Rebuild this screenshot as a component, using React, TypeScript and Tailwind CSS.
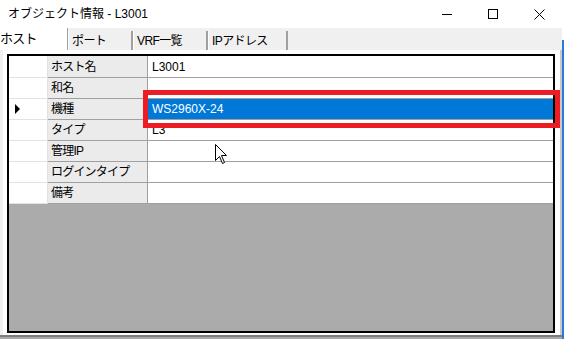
import React from "react"

type Row = {
  label: string
  value: string
  selected?: boolean
}

const rows: Row[] = [
  { label: "ホスト名", value: "L3001" },
  { label: "和名", value: "" },
  { label: "機種", value: "WS2960X-24", selected: true },
  { label: "タイプ", value: "L3" },
  { label: "管理IP", value: "" },
  { label: "ログインタイプ", value: "" },
  { label: "備考", value: "" },
]

const tabs = [
  { name: "ポート", w: "w-[65px]" },
  { name: "VRF一覧", w: "w-[75px]" },
  { name: "IPアドレス", w: "w-[80px]" },
]

function TitleBar() {
  return (
    <div className="h-[28px] flex items-center bg-white">
      <div className="pl-[8px] text-[12px] text-black">オブジェクト情報 - L3001</div>
      <div className="ml-auto flex h-full">
        <div className="w-[46px] h-full flex items-center justify-center">
          <svg width="10" height="10" viewBox="0 0 10 10">
            <path d="M0 5.5H10" stroke="#000" strokeWidth="1" />
          </svg>
        </div>
        <div className="w-[46px] h-full flex items-center justify-center">
          <svg width="10" height="10" viewBox="0 0 10 10">
            <rect x="0.5" y="0.5" width="9" height="9" fill="none" stroke="#000" strokeWidth="1" />
          </svg>
        </div>
        <div className="w-[46px] h-full flex items-center justify-center">
          <svg width="11" height="11" viewBox="0 0 11 11">
            <path d="M0.5 0.5L10.5 10.5M10.5 0.5L0.5 10.5" stroke="#000" strokeWidth="1" />
          </svg>
        </div>
      </div>
    </div>
  )
}

function TabStrip() {
  return (
    <div className="h-[22px] bg-[#f0f0f0] flex items-end">
      <div className="w-[68px] h-[22px] bg-white border-r border-[#a0a0a0] flex items-center text-[13px] tracking-[-0.8px]">
        ホスト
      </div>
      {tabs.map(t => (
        <div
          key={t.name}
          className={`${t.w} h-[19px] bg-[#f0f0f0] border-l border-white border-r-2 border-r-[#a0a0a0] flex items-center pl-[3px] text-[12px] tracking-[-0.6px]`}
        >
          {t.name}
        </div>
      ))}
    </div>
  )
}

function GridRow({ row, first }: { row: Row; first: boolean }) {
  return (
    <div className={`${first ? "h-[22px]" : "h-[21px]"} flex`}>
      <div className="w-[39px] h-full bg-white border-b border-r border-[#e2e2e2] flex items-center pl-[6px]">
        {row.selected && (
          <svg width="6" height="10" viewBox="0 0 6 10">
            <path d="M0 0L5 5L0 10Z" fill="#000" />
          </svg>
        )}
      </div>
      <div className="w-[100px] h-full bg-[#ebebeb] border-b border-r border-[#a0a0a0] flex items-center pl-[3px] text-[12px] tracking-[-0.8px]">
        {row.label}
      </div>
      <div
        className={`flex-1 h-full border-b border-[#a0a0a0] flex items-center pl-[4px] text-[12px] ${
          row.selected ? "bg-[#0078d7] text-white" : "bg-white text-black"
        }`}
      >
        {row.value}
      </div>
    </div>
  )
}

export default function App() {
  return (
    <div
      className="w-[564px] h-[339px] relative overflow-hidden bg-white flex text-black"
      style={{ fontFamily: '"Liberation Sans", "Noto Sans CJK JP", sans-serif' }}
    >
      <div className="w-[562px] h-full flex flex-col">
        <TitleBar />
        <TabStrip />
        <div className="flex-1 flex flex-col bg-white border-l-[3px] border-[#f0f0f0] pl-[4px] pr-[5px] pt-[4px] pb-[2px] border-r-2 border-r-[#c8c8c8]">
          <div className="flex-1 border-2 border-black flex flex-col">
            {rows.map((r, i) => (
              <GridRow key={r.label} row={r} first={i === 0} />
            ))}
            <div className="flex-1 bg-[#ababab]" />
          </div>
        </div>
        <div className="h-[4px] bg-[#a8a8a8] border-t-2 border-[#7c7c7c]" />
      </div>
      <div className="w-[2px] h-full flex flex-col">
        <div className="h-[40px] bg-white" />
        <div className="flex-1 bg-[#2b7bd4]" />
      </div>

      {/* red highlight box */}
      <div className="absolute left-[143px] top-[90px] w-[417px] h-[38px] border-[5px] border-[#ed1c24]" />

      {/* mouse cursor */}
      <svg className="absolute left-[215px] top-[144px]" width="13" height="21" viewBox="0 0 13 21">
        <path d="M0.5 0.5V16.5L4.5 12.5L7.5 19.5L9.5 18.5L6.5 11.5H11.5Z" fill="#fff" stroke="#000" strokeWidth="1" />
      </svg>
    </div>
  )
}
